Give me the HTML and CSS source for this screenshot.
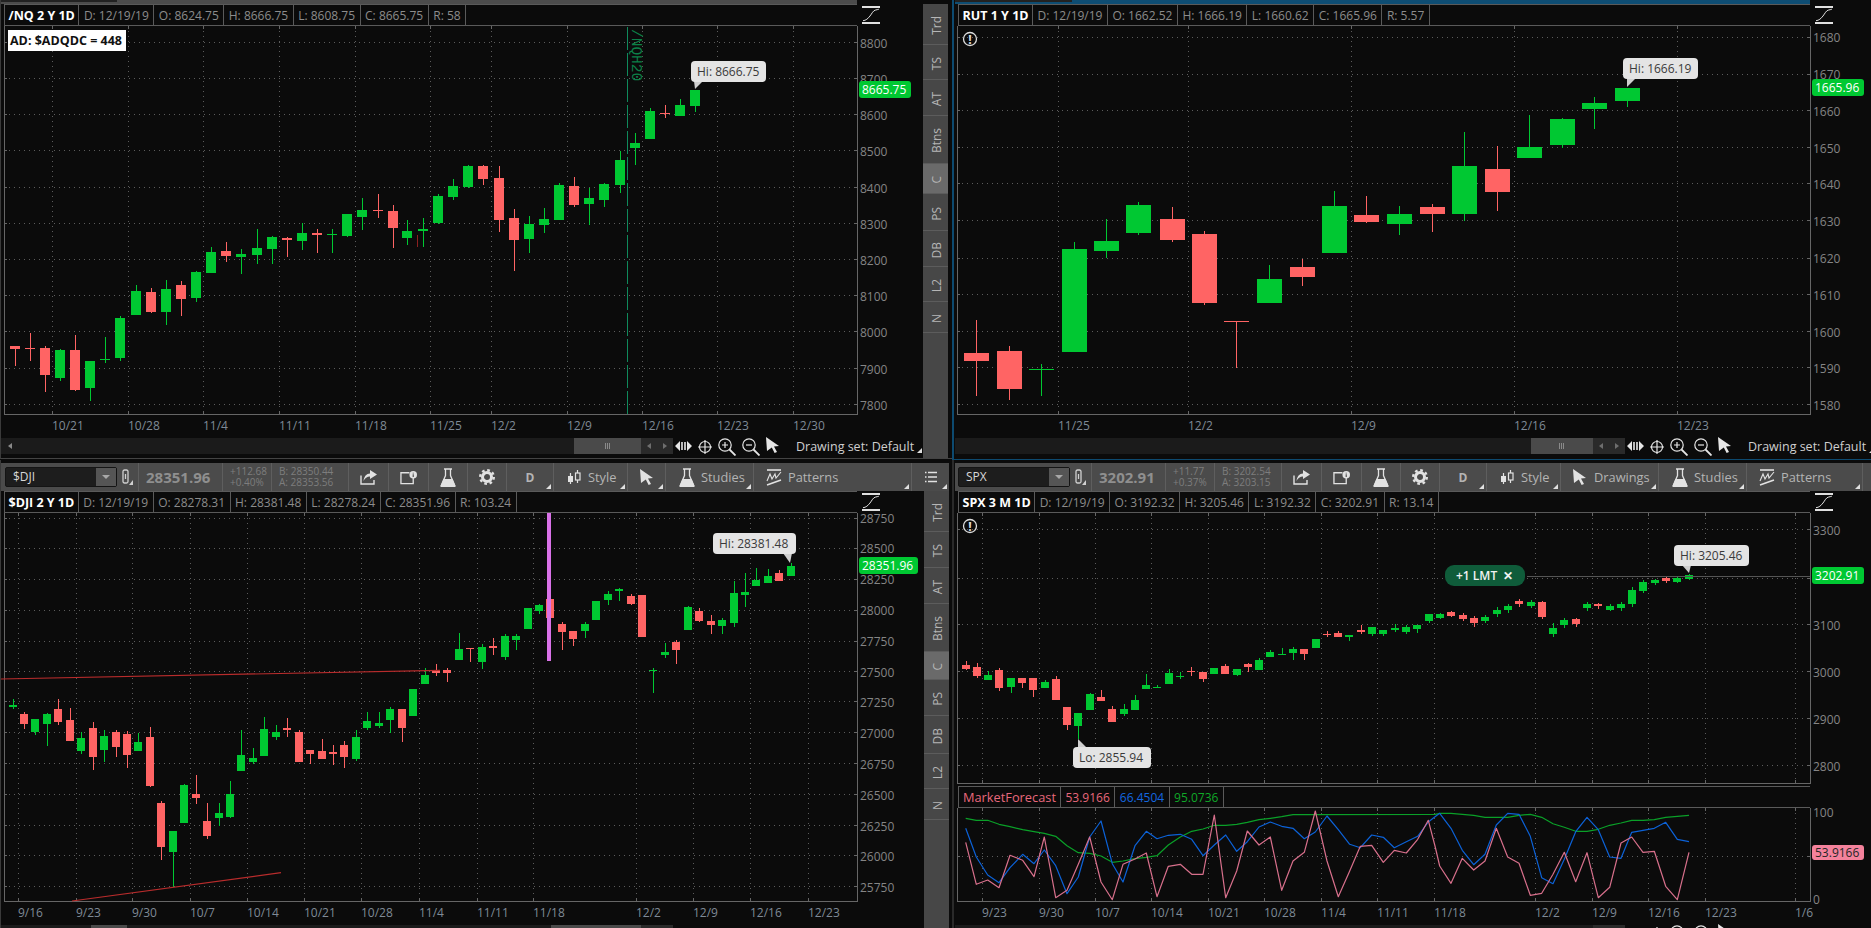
FILE: index.html
```html
<!DOCTYPE html>
<html lang="en">
<head>
<meta charset="utf-8">
<title>Charts</title>
<link rel="stylesheet" href="styles.css">
</head>
<body>
<svg class="defs" width="0" height="0" aria-hidden="true">
  <symbol id="i-curve" viewBox="0 0 18 18"><path class="s" d="M0 1h18M0 17h18" stroke-width="2"/><path class="s" d="M1 14.700C4 14.500 6 12.500 8 10S11 4.500 13.700 4 16 3.300 17 3.300" stroke-width="1"/></symbol>
  <symbol id="i-move" viewBox="0 0 17 12"><path class="f" d="M0 6l5-5v10zM17 6l-5-5v10z"/><path class="s" d="M7 2v8M10 2v8" stroke-width="1.6"/></symbol>
  <symbol id="i-target" viewBox="0 0 14 14"><circle class="s" cx="7" cy="7" r="5.5" stroke-width="1.2"/><path class="s" d="M7 0v14M0 7h14" stroke-width="1.2"/></symbol>
  <symbol id="i-zin" viewBox="0 0 18 18"><circle class="s" cx="7" cy="7" r="6.2" stroke-width="1.2"/><path class="s" d="M11.5 11.5l6 6" stroke-width="1.8"/><path class="s" d="M4 7h6M7 4v6" stroke-width="1.2"/></symbol>
  <symbol id="i-zout" viewBox="0 0 18 18"><circle class="s" cx="7" cy="7" r="6.2" stroke-width="1.2"/><path class="s" d="M11.5 11.5l6 6" stroke-width="1.8"/><path class="s" d="M4 7h6" stroke-width="1.2"/></symbol>
  <symbol id="i-cursor" viewBox="0 0 13 16"><path class="f" d="M0 0l13 9-5 .6 3 5.4-2.400 1-2.800-5.400L1 14z"/></symbol>
  <symbol id="i-link" viewBox="0 0 11 16"><rect class="s" x="1" y="1" width="5" height="13" rx="1.500" stroke-width="1.300"/><path class="s" d="M3.500 5v5" stroke-width="1.300"/><path class="f" d="M11 11v5H7z"/></symbol>
  <symbol id="i-share" viewBox="0 0 17 15"><path class="s" d="M1 5.500v8.500h13v-4" stroke-width="1.400"/><path class="f" d="M10 0l7 4.500-7 4.500V6.500C7 6.500 5 8 3.500 11 4 6.500 6.500 3.500 10 3.500z"/></symbol>
  <symbol id="i-folder" viewBox="0 0 18 14"><path class="s" d="M10 2H1v11.500h13V7" stroke-width="1.400"/><circle class="f" cx="14" cy="4" r="4"/><path class="h" d="M14 2v.8M14 3.500V6.500" stroke-width="1.200"/></symbol>
  <symbol id="i-flask" viewBox="0 0 16 19"><path class="f" d="M3.500 11h9l3 7c.200.500 0 1-.6 1H1.100c-.6 0-.8-.5-.6-1z"/><path class="s" d="M4 1h8M5.500 1v6.500L1 18M10.500 1v6.500L15 18" stroke-width="1.300"/></symbol>
  <symbol id="i-gear" viewBox="0 0 16 16"><circle class="s" cx="8" cy="8" r="4.500" stroke-width="3"/><circle class="d" cx="8" cy="8" r="6.800" stroke-width="2.400"/></symbol>
  <symbol id="i-style" viewBox="0 0 14 15"><path class="s" d="M3.500 3v11M10.500 0v13" stroke-width="1.200"/><rect class="f" x="1" y="6" width="5" height="6"/><rect class="b" x="8.500" y="3" width="4.500" height="7" stroke-width="1.200"/></symbol>
  <symbol id="i-pattern" viewBox="0 0 16 17"><path class="s" d="M1 1h14" stroke-width="1.600"/><path class="s" d="M1 12l3-7 2 5 3-5 1 4 5-6" stroke-width="1.100"/><path class="s" d="M1 16l14-5" stroke-width="1.600"/></symbol>
  <symbol id="i-list" viewBox="0 0 12 12"><path class="s" d="M3 1.500h9M3 6h9M3 10.500h9" stroke-width="1.500"/><path class="s" d="M0 1.500h1.500M0 6h1.500M0 10.500h1.500" stroke-width="1.500"/></symbol>
</svg>

<main class="desk">

  <section class="pane pane-left">
    <div class="content">
      <div class="strip strip-grey"></div>
      <div class="legend-row">
        <div class="legend legend-left">
          <span class="cell title">/NQ 2 Y 1D</span>
          <span class="cell">D: 12/19/19</span>
          <span class="cell">O: 8624.75</span>
          <span class="cell">H: 8666.75</span>
          <span class="cell">L: 8608.75</span>
          <span class="cell">C: 8665.75</span>
          <span class="cell">R: 58</span>
        </div>
        <div class="corner corner-left"><svg class="ico-curve"><use href="#i-curve"/></svg></div>
      </div>
      <svg class="plot" id="nq" viewBox="0 26 924 412" width="924" height="412"></svg>
      <div class="tools">
        <div class="track track-left">
          <span class="arrow"></span><span class="track-fill"></span>
          <span class="thumb thumb-tl"><i></i></span>
          <span class="btns"><span class="tri-l"></span><span class="tri-r"></span></span>
        </div>
        <svg class="tool t-move"><use href="#i-move"/></svg>
        <svg class="tool t-target"><use href="#i-target"/></svg>
        <svg class="tool t-zoom"><use href="#i-zin"/></svg>
        <svg class="tool t-zoom"><use href="#i-zout"/></svg>
        <svg class="tool t-cursor"><use href="#i-cursor"/></svg>
        <span class="drawset">Drawing set: Default</span>
      </div>
    </div>
    <aside class="side side-top">
      <span class="sbtn"><b>Trd</b></span><span class="sbtn"><b>TS</b></span><span class="sbtn"><b>AT</b></span><span class="sbtn"><b>Btns</b></span><span class="sbtn active"><b>C</b></span><span class="sbtn"><b>PS</b></span><span class="sbtn"><b>DB</b></span><span class="sbtn"><b>L2</b></span><span class="sbtn"><b>N</b></span>
    </aside>
  </section>

  <section class="pane pane-right">
    <div class="content">
      <div class="strip strip-blue"></div>
      <div class="legend-row">
        <div class="legend legend-right">
          <span class="cell title">RUT 1 Y 1D</span>
          <span class="cell">D: 12/19/19</span>
          <span class="cell">O: 1662.52</span>
          <span class="cell">H: 1666.19</span>
          <span class="cell">L: 1660.62</span>
          <span class="cell">C: 1665.96</span>
          <span class="cell">R: 5.57</span>
        </div>
        <div class="corner"><svg class="ico-curve"><use href="#i-curve"/></svg></div>
      </div>
      <svg class="plot" id="rut" viewBox="955 26 916 412" width="916" height="412"></svg>
      <div class="tools">
        <div class="track track-right">
          <span class="arrow"></span><span class="track-fill"></span>
          <span class="thumb thumb-tr"><i></i></span>
          <span class="btns"><span class="tri-l"></span><span class="tri-r"></span></span>
        </div>
        <svg class="tool t-move"><use href="#i-move"/></svg>
        <svg class="tool t-target"><use href="#i-target"/></svg>
        <svg class="tool t-zoom"><use href="#i-zin"/></svg>
        <svg class="tool t-zoom"><use href="#i-zout"/></svg>
        <svg class="tool t-cursor"><use href="#i-cursor"/></svg>
        <span class="drawset">Drawing set: Default</span>
      </div>
    </div>
  </section>

  <section class="pane pane-left pane-low">
    <header class="toolbar toolbar-left">
      <div class="symbol"><span class="sym-name">$DJI</span><span class="sym-drop"></span></div>
      <div class="tb tb-link"><svg class="ico ico-link"><use href="#i-link"/></svg></div>
      <div class="tb tb-price tb-price-wide">28351.96</div>
      <div class="tb tb-change"><span>+112.68</span><span>+0.40%</span></div>
      <div class="tb tb-quote tb-quote-wide"><span>B: 28350.44</span><span>A: 28353.56</span></div>
      <div class="tb tb-share"><svg class="ico ico-share"><use href="#i-share"/></svg></div>
      <div class="tb tb-share"><svg class="ico ico-share"><use href="#i-folder"/></svg></div>
      <div class="tb tb-icon"><svg class="ico ico-flask"><use href="#i-flask"/></svg></div>
      <div class="tb tb-icon"><svg class="ico ico-gear"><use href="#i-gear"/></svg></div>
      <div class="tb tb-d menu">D</div>
      <div class="tb tb-style menu"><svg class="ico ico-style"><use href="#i-style"/></svg>Style</div>
      <div class="tb tb-arrow menu"><svg class="ico ico-cursor"><use href="#i-cursor"/></svg></div>
      <div class="tb tb-studies menu"><svg class="ico ico-flask"><use href="#i-flask"/></svg>Studies</div>
      <div class="tb tb-patterns-wide menu"><svg class="ico ico-pattern"><use href="#i-pattern"/></svg>Patterns</div>
      <div class="tb tb-list menu"><svg class="ico ico-list"><use href="#i-list"/></svg></div>
    </header>
    <div class="pane-main">
      <div class="content">
        <div class="legend-row">
          <div class="legend legend-left">
            <span class="cell title">$DJI 2 Y 1D</span>
            <span class="cell">D: 12/19/19</span>
            <span class="cell">O: 28278.31</span>
            <span class="cell">H: 28381.48</span>
            <span class="cell">L: 28278.24</span>
            <span class="cell">C: 28351.96</span>
            <span class="cell">R: 103.24</span>
          </div>
          <div class="corner corner-left"><svg class="ico-curve"><use href="#i-curve"/></svg></div>
        </div>
        <svg class="plot" id="dji" viewBox="0 512 924 412" width="924" height="412"></svg>
        <div class="tools">
          <div class="track track-left">
            <span class="arrow"></span><span class="pad-dji"></span><span class="thumb thumb-dji"></span><span class="track-fill"></span>
            <span class="thumb thumb-bl"><i></i></span>
            <span class="btns"><span class="tri-l"></span><span class="tri-r"></span></span>
          </div>
        </div>
      </div>
      <aside class="side side-low">
        <span class="sbtn"><b>Trd</b></span><span class="sbtn"><b>TS</b></span><span class="sbtn"><b>AT</b></span><span class="sbtn"><b>Btns</b></span><span class="sbtn active"><b>C</b></span><span class="sbtn"><b>PS</b></span><span class="sbtn"><b>DB</b></span><span class="sbtn"><b>L2</b></span><span class="sbtn"><b>N</b></span>
      </aside>
    </div>
  </section>

  <section class="pane pane-right pane-low">
    <header class="toolbar toolbar-right">
      <div class="symbol"><span class="sym-name">SPX</span><span class="sym-drop"></span></div>
      <div class="tb tb-link"><svg class="ico ico-link"><use href="#i-link"/></svg></div>
      <div class="tb tb-price">3202.91</div>
      <div class="tb tb-change"><span>+11.77</span><span>+0.37%</span></div>
      <div class="tb tb-quote"><span>B: 3202.54</span><span>A: 3203.15</span></div>
      <div class="tb tb-share"><svg class="ico ico-share"><use href="#i-share"/></svg></div>
      <div class="tb tb-share"><svg class="ico ico-share"><use href="#i-folder"/></svg></div>
      <div class="tb tb-icon"><svg class="ico ico-flask"><use href="#i-flask"/></svg></div>
      <div class="tb tb-icon"><svg class="ico ico-gear"><use href="#i-gear"/></svg></div>
      <div class="tb tb-d menu">D</div>
      <div class="tb tb-style menu"><svg class="ico ico-style"><use href="#i-style"/></svg>Style</div>
      <div class="tb tb-drawings menu"><svg class="ico ico-cursor"><use href="#i-cursor"/></svg>Drawings</div>
      <div class="tb tb-studies menu"><svg class="ico ico-flask"><use href="#i-flask"/></svg>Studies</div>
      <div class="tb tb-patterns menu"><svg class="ico ico-pattern"><use href="#i-pattern"/></svg>Patterns</div>
    </header>
    <div class="content">
      <div class="legend-row">
        <div class="legend legend-right">
          <span class="cell title">SPX 3 M 1D</span>
          <span class="cell">D: 12/19/19</span>
          <span class="cell">O: 3192.32</span>
          <span class="cell">H: 3205.46</span>
          <span class="cell">L: 3192.32</span>
          <span class="cell">C: 3202.91</span>
          <span class="cell">R: 13.14</span>
        </div>
        <div class="corner"><svg class="ico-curve"><use href="#i-curve"/></svg></div>
      </div>
      <svg class="plot" id="spx" viewBox="955 512 916 273" width="916" height="273"></svg>
      <div class="legend legend-right">
        <span class="cell mf-name">MarketForecast</span>
        <span class="cell mf-pink">53.9166</span>
        <span class="cell mf-blue">66.4504</span>
        <span class="cell mf-green">95.0736</span>
      </div>
      <svg class="plot" id="mf" viewBox="955 807 916 117" width="916" height="117"></svg>
      <div class="tools">
        <div class="track track-right">
          <span class="arrow"></span><span class="track-fill"></span>
          <span class="btns"><span class="tri-l"></span><span class="tri-r"></span></span>
        </div>
        <svg class="tool t-move"><use href="#i-move"/></svg>
        <svg class="tool t-target"><use href="#i-target"/></svg>
        <svg class="tool t-zoom"><use href="#i-zin"/></svg>
        <svg class="tool t-zoom"><use href="#i-zout"/></svg>
        <svg class="tool t-cursor"><use href="#i-cursor"/></svg>
      </div>
    </div>
  </section>

</main>
<script src="chart.js"></script>
</body>
</html>
```
FILE: styles.css
```css
* { box-sizing: border-box; }
html, body { margin: 0; padding: 0; background: #0b0b0b; }
body { width: 1871px; height: 928px; overflow: hidden; font: 12px "Open Sans", "Liberation Sans", sans-serif; color: #8c8c8c; }
.defs { position: absolute; }

/* symbol paint */
.s { fill: none; stroke: currentColor; }
.f { fill: currentColor; }
.h { fill: none; stroke: #4b4b4b; }
.d { fill: none; stroke: currentColor; stroke-dasharray: 2.670 2.670; }
.b { fill: #4b4b4b; stroke: currentColor; }

.desk { display: grid; grid-template-columns: 952px 919px; grid-template-rows: 460px 468px; width: 1871px; height: 928px; }
.pane { display: flex; min-width: 0; min-height: 0; overflow: hidden; }
.pane-left { border-left: 1px solid #3a3a3a; }
.pane-left .content { width: 923px; margin-left: -1px; flex: none; }
.pane-right { border-left: 2px solid #0d4a70; padding-left: 1px; border-bottom: 1px solid #0d4a70; }
.pane-right .content { width: 916px; flex: none; }
.pane-low { flex-direction: column; padding-top: 3px; border-bottom: 0; background: #0b0b0b; }
.pane-low.pane-left .content, .pane-left .pane-main .content { width: 924px; margin-left: -1px; }
.pane-main { display: flex; min-height: 0; flex: 1; }
.pane-low.pane-right { border-left-color: #2a2a2a; padding-left: 1px; }
.pane:first-child { border-bottom: 1px solid #444; height: 459px; }
.pane-right:nth-child(2) { height: 460px; }

.content { display: flex; flex-direction: column; }
.strip { position: relative; height: 4px; flex: none; }
.strip-grey { width: 857px; background: #4c4c4c; }
.strip-blue { width: 855px; background: #0e4d73; }
.strip::before { content: ""; position: absolute; left: 0; top: 0; width: 117px; height: 2px; background: #222; }

.legend-row { display: flex; flex: none; }
.legend { display: flex; height: 22px; flex: none; border-top: 1px solid #5a5a5a; border-bottom: 1px solid #5a5a5a; }
.legend-left { width: 853px; margin-left: 4px; }
.legend-right { width: 852px; margin-left: 3px; }
.cell { display: flex; align-items: center; padding: 0 4.500px; border-right: 1px solid #5a5a5a; white-space: nowrap; color: #8c8c8c; }
.cell:first-child { border-left: 1px solid #5a5a5a; }
.title { color: #fff; font-weight: 700; font-size: 12.500px; padding: 0 3.500px; }
.mf-name { color: #e8687c; font-size: 12.800px; padding: 0 4px; }
.mf-pink { color: #e8687c; }
.mf-blue { color: #1468e0; }
.mf-green { color: #10a828; }
.corner { flex: 1; padding: 2px 0 0 5px; }
.corner-left { padding-left: 5px; }
.ico-curve { display: block; width: 18px; height: 18px; color: #e0e0e0; }

.plot { display: block; flex: none; background: #0b0b0b; }
.plot text { font-family: "Open Sans", "Liberation Sans", sans-serif; font-size: 12px; }
.ax { fill: #858585; }
.date { fill: #7f8a96; }
.tag-t { fill: #fff; }
.tag-p { fill: #262626; }
.bub-t { fill: #3a3a3a; }
.plot text.mono { fill: #0c8048; font-family: "Liberation Mono", monospace; font-size: 14.500px; }
.plot text.ad-t { fill: #111; font-weight: 700; font-size: 12.500px; }
.pill-t { fill: #f2f2f2; font-weight: 600; }
.warn-t { fill: #e0e0e0; font-weight: 700; }

.tools { display: flex; align-items: center; height: 16px; flex: none; color: #e6e6e6; }
.track { display: flex; height: 16px; flex: none; background: #1b1b1b; align-items: center; }
.track-left { width: 672px; margin-left: 1px; }
.track-right { width: 670px; }
.track-fill { flex: 1; }
.arrow { width: 14px; height: 16px; position: relative; }
.track-left .arrow::after { content: ""; position: absolute; left: 7px; top: 5px; border-style: solid; border-width: 3px 4px 3px 0; border-color: transparent #8a8a8a transparent transparent; }
.thumb { display: flex; height: 16px; align-items: center; justify-content: center; background: #4a4a4a; }
.thumb i { display: block; width: 6px; height: 6px; background: repeating-linear-gradient(90deg, #8a8a8a 0 1px, transparent 1px 2px); }
.thumb-tl { width: 67px; }
.thumb-tr { width: 62px; }
.thumb-bl { width: 90px; }
.thumb-dji { width: 36px; }
.pad-dji { width: 76px; }
.btns { display: flex; width: 32px; height: 16px; background: #2a2a2a; align-items: center; justify-content: space-around; }
.tri-l { border-style: solid; border-width: 3px 4px 3px 0; border-color: transparent #6e6e6e transparent transparent; }
.tri-r { border-style: solid; border-width: 3px 0 3px 4px; border-color: transparent transparent transparent #6e6e6e; }

.tool { flex: none; margin-left: 6px; }
.t-move { width: 17px; height: 12px; margin-left: 2px; }
.t-target { width: 14px; height: 14px; margin-top: 1px; }
.t-zoom { width: 18px; height: 18px; margin-top: 1px; }
.t-cursor { width: 13px; height: 16px; margin-top: -3px; }
.drawset { position: relative; margin-left: 17px; white-space: nowrap; color: #cfcfcf; font-size: 12.500px; }
.drawset::after { content: ""; position: absolute; right: -8px; bottom: 2px; border-style: solid; border-width: 0 0 5px 5px; border-color: transparent transparent #ddd transparent; }

.side { width: 25px; flex: none; background: #474747; display: flex; flex-direction: column; }
.side-top { margin-top: 4px; height: 454px; }
.sbtn { display: flex; justify-content: center; align-items: center; height: 36px; flex: none; padding-top: 3px; border-bottom: 1px solid #5c5c5c; }
.sbtn:nth-child(1) { height: 41px; }
.sbtn:nth-child(2) { height: 35px; }
.sbtn:nth-child(4) { height: 48px; }
.sbtn:nth-child(5) { height: 30px; }
.sbtn:nth-child(6) { height: 37px; }
.sbtn:nth-child(8) { height: 35px; }
.sbtn:nth-child(9) { height: 31px; }
.side-low .sbtn:nth-child(2) { height: 36px; }
.side-low .sbtn:nth-child(5) { height: 28px; }
.side-low .sbtn:nth-child(6) { height: 36px; }
.side-low .sbtn:nth-child(7) { height: 38px; }
.sbtn b { font-weight: 400; color: #b6b6b6; writing-mode: vertical-rl; transform: rotate(180deg); line-height: 1; margin-left: 2px; }
.sbtn.active { background: #6a6a6a; }

.toolbar { display: flex; height: 28px; flex: none; background: #4b4b4b; color: #b4b4b4; align-items: stretch; font-size: 12.800px; }
.toolbar-left { width: 948px; }
.toolbar-right { width: 916px; }
.symbol { display: flex; width: 112px; height: 20px; margin: 4px 0 0 3px; background: #1d1d1d; border: 1px solid #141414; border-radius: 2px; flex: none; }
.toolbar-left .symbol { margin-left: 4px; }
.sym-name { flex: 1; padding-left: 7px; color: #d8d8d8; line-height: 18px; font-size: 12px; }
.sym-drop { position: relative; width: 20px; background: #555; }
.sym-drop::after { content: ""; position: absolute; left: 6px; top: 7px; border-style: solid; border-width: 4px 4px 0; border-color: #a8a8a8 transparent transparent; }
.tb { position: relative; display: flex; align-items: center; flex: none; border-right: 1px solid #5e5e5e; }
.tb-link { width: 22px; justify-content: center; }
.tb-price { width: 74px; padding-left: 7px; font-weight: 700; font-size: 15px; color: #8f8f8f; }
.tb-price-wide { width: 84px; }
.tb-change, .tb-quote { flex-direction: column; justify-content: center; font-size: 10px; line-height: 11px; color: #7d7d7d; align-items: flex-start; }
.tb-change { width: 49px; padding-left: 7px; }
.tb-quote { width: 67px; padding-left: 7px; }
.tb-quote-wide { width: 77px; }
.tb-share { width: 40px; justify-content: center; }
.tb-icon { width: 39px; justify-content: center; }
.tb-d { width: 47px; justify-content: center; font-weight: 700; font-size: 12px; }
.tb-style { width: 74px; padding-left: 13px; gap: 7px; }
.tb-arrow { width: 38px; padding-left: 12px; }
.tb-drawings { width: 98px; padding-left: 12px; gap: 8px; }
.tb-studies { width: 88px; padding-left: 13px; gap: 6px; }
.tb-patterns { width: 116px; padding-left: 12px; gap: 6px; }
.tb-patterns-wide { width: 158px; padding-left: 12px; gap: 6px; }
.tb-list { width: 37px; padding-left: 13px; border-right: 0; }
.menu::after { content: ""; position: absolute; right: 2px; bottom: 2px; border-style: solid; border-width: 0 0 5px 5px; border-color: transparent transparent #e0e0e0 transparent; }
.ico { flex: none; color: #e2e2e2; }
.ico-link { width: 11px; height: 16px; color: #d0d0d0; }
.ico-share { width: 17px; height: 15px; }
.ico-flask { width: 16px; height: 19px; }
.ico-gear { width: 16px; height: 16px; }
.ico-style { width: 14px; height: 15px; }
.ico-cursor { width: 13px; height: 16px; }
.ico-pattern { width: 16px; height: 17px; }
.ico-list { width: 12px; height: 12px; }
```
FILE: chart.js
```js
const NS = 'http://www.w3.org/2000/svg';
const GREEN = '#00c832', RED = '#ff6464', GRID = '#5c5c5c', AXIS = '#666';

function el(svg, name, attrs, text) {
  const n = document.createElementNS(NS, name);
  for (const k in attrs) n.setAttribute(k, attrs[k]);
  if (text !== undefined) n.textContent = text;
  svg.appendChild(n);
  return n;
}
const box = (svg, x, y, w, h, fill, extra) =>
  el(svg, 'rect', Object.assign({ x, y, width: w, height: h, fill, 'shape-rendering': 'crispEdges' }, extra || {}));

function frame(svg, c) {
  const { l, r, t, b } = c;
  c.ys.forEach(p => {
    const y = Math.round(p[0]) + 0.5;
    el(svg, 'path', { d: `M${l} ${y}H${r}`, stroke: GRID, 'stroke-dasharray': '1 4', 'shape-rendering': 'crispEdges' });
    el(svg, 'path', { d: `M${l} ${y}h3M${r - 3} ${y}h3`, stroke: AXIS, 'shape-rendering': 'crispEdges' });
  });
  c.xs.forEach(p => {
    const x = Math.round(p[0]) + 0.5;
    el(svg, 'path', { d: `M${x} ${t}V${b}`, stroke: GRID, 'stroke-dasharray': '1 4', 'shape-rendering': 'crispEdges' });
    el(svg, 'path', { d: `M${x} ${t}v3M${x} ${b - 3}v3`, stroke: AXIS, 'shape-rendering': 'crispEdges' });
    if (p[1] && c.dateY) el(svg, 'text', { x: x - 0.5, y: c.dateY, class: 'date' }, p[1]);
  });
  const f = `M${l + .5} ${t}V${b + .5}H${r + .5}V${t}`;
  el(svg, 'path', { d: f, fill: 'none', stroke: AXIS, 'shape-rendering': 'crispEdges' });
  c.ys.forEach(p => {
    if (p[1]) el(svg, 'text', { x: r + 3, y: p[0] + 5.5, class: 'ax' }, p[1]);
  });
}

function candles(svg, list, w, map) {
  list.forEach(d => {
    const m = map ? map(d) : d;
    const col = d[5] ? GREEN : RED;
    const x = Math.round(m[0]);
    const wt = Math.round(m[1]), wb = Math.round(m[2]), bt = Math.round(m[3]), bb = Math.round(m[4]);
    box(svg, x, wt, 1, Math.max(1, wb - wt), col);
    box(svg, x - Math.floor(w / 2), bt, w, Math.max(1, bb - bt), col);
  });
}

function tag(svg, x, y, w, h, fill, cls, text) {
  el(svg, 'rect', { x, y, width: w, height: h, rx: 3, fill });
  el(svg, 'text', { x: x + 3, y: y + h / 2 + 4.5, class: cls }, text);
}

function bubble(svg, x, y, w, h, tip, base, text) {
  const edge = tip[1] > y ? y + h - 1 : y + 1;
  el(svg, 'polygon', { points: `${base},${edge} ${base + 9},${edge} ${tip[0]},${tip[1]}`, fill: '#cfcfcf' });
  el(svg, 'rect', { x, y, width: w, height: h, rx: 4, fill: '#e4e4e4' });
  el(svg, 'text', { x: x + 6, y: y + h / 2 + 4.5, class: 'bub-t' }, text);
}

function warn(svg, cx, cy) {
  el(svg, 'circle', { cx, cy, r: 6.5, fill: 'none', stroke: '#dedede', 'stroke-width': 1.3 });
  el(svg, 'text', { x: cx, y: cy + 4.5, 'text-anchor': 'middle', class: 'warn-t' }, '!');
}

const g1 = id => document.getElementById(id);

/* ---------- /NQ ---------- */
(function () {
  const s = g1('nq');
  frame(s, {
    l: 4, r: 857, t: 26, b: 414, dateY: 430,
    xs: [[52.3, '10/21'], [128.3, '10/28'], [203.3, '11/4'], [279.3, '11/11'], [354.7, '11/18'], [430.3, '11/25'], [491.3, '12/2'], [566.7, '12/9'], [642.3, '12/16'], [717.3, '12/23'], [793.3, '12/30']],
    ys: [[42.3, '8800'], [78.3, '8700'], [114, '8600'], [150.3, '8500'], [187.3, '8400'], [223.3, '8300'], [259.3, '8200'], [295.3, '8100'], [331.3, '8000'], [368.3, '7900'], [404.3, '7800']]
  });
  candles(s, [
    [15, 346, 366, 346, 349, 0], [29.7, 333, 361, 348, 349, 0], [45, 346, 392, 348, 375, 0], [60, 349, 381, 350, 378, 1],
    [75, 335, 391, 350, 390, 0], [90, 361, 401, 361, 388, 1], [104.7, 337, 363, 359, 360, 1], [120, 316, 361, 318, 358, 1],
    [135.7, 285, 315, 291, 315, 1], [151, 288, 313, 292, 312, 0], [166, 280, 325, 289, 312, 1], [181, 281, 316, 285, 299, 0],
    [196, 271, 302, 272, 298, 1], [211, 247, 273, 252, 273, 1], [226, 242, 262, 251, 256, 0], [241, 249, 274, 254, 257, 1],
    [256.7, 229, 264, 248, 255, 1], [271.7, 236, 264, 237, 249, 1], [286.7, 237, 257, 238, 240, 0], [301.7, 223, 250, 233, 241, 1],
    [316.7, 229, 253, 233, 235, 0], [331.7, 229, 253, 234, 235, 1], [346.7, 214, 237, 214, 236, 1], [361.7, 198, 230, 210, 217, 1],
    [377.7, 194, 218, 210, 211, 0], [392.7, 205, 248, 211, 228, 0], [407.3, 220, 245, 231, 238, 1], [422.7, 218, 247, 229, 231, 1],
    [437.7, 194, 224, 196, 223, 1], [452.7, 179, 200, 186, 197, 1], [468, 165, 188, 166, 187, 1], [483, 165, 185, 166, 179, 0],
    [498.7, 166, 232, 178, 220, 0], [513.7, 209, 271, 218, 240, 0], [528.7, 216, 253, 224, 239, 1], [543.7, 208, 233, 219, 225, 1],
    [558.7, 183, 220, 185, 220, 1], [573.7, 177, 207, 186, 205, 0], [588.7, 188, 225, 198, 204, 1], [603.7, 183, 207, 184, 200, 1],
    [619.7, 151, 193, 160, 185, 1], [634.7, 133, 165, 143, 148, 1], [650, 108, 139, 111, 139, 1], [665, 105, 118, 113, 114, 0],
    [680, 99, 116, 105, 116, 1], [695, 90, 112, 90, 106, 1]
  ], 10);
  box(s, 417, 235, 1, 12, '#8c2020');
  el(s, 'path', { d: 'M627.5 27V414', stroke: '#0f8a5c', 'stroke-dasharray': '23 3', 'shape-rendering': 'crispEdges' });
  el(s, 'text', { transform: 'translate(632,29) rotate(90)', class: 'mono' }, '/NQH20');
  bubble(s, 691, 61, 75, 21, [695, 89], 694, 'Hi: 8666.75');
  tag(s, 859, 81, 52, 17, '#00c832', 'tag-t', '8665.75');
  box(s, 8, 30, 118, 21, '#fff');
  el(s, 'text', { x: 10, y: 45, class: 'ad-t' }, 'AD: $ADQDC = 448');
})();

/* ---------- RUT ---------- */
(function () {
  const s = g1('rut');
  frame(s, {
    l: 957, r: 1810, t: 26, b: 414, dateY: 430,
    xs: [[1057.7, '11/25'], [1188.3, '12/2'], [1350.7, '12/9'], [1513.5, '12/16'], [1676.5, '12/23']],
    ys: [[36.7, '1680'], [73.7, '1670'], [110.3, '1660'], [147, '1650'], [183, '1640'], [220, '1630'], [257.7, '1620'], [294.3, '1610'], [331, '1600'], [367, '1590'], [404, '1580']]
  });
  candles(s, [
    [976, 320, 396, 353, 361, 0], [1009, 346, 400, 351, 389, 0], [1041, 364, 396, 369, 370, 1], [1074, 242, 352, 249, 352, 1],
    [1106, 219, 258, 241, 251, 1], [1138.3, 202, 235, 205, 233, 1], [1171.7, 207, 242, 219, 240, 0], [1204, 231, 305, 234, 303, 0],
    [1236, 321, 368, 321, 322, 0], [1269, 265, 303, 279, 303, 1], [1301.5, 259, 286, 267, 277, 0], [1334.3, 191, 253, 206, 253, 1],
    [1366.3, 196, 223, 215, 222, 0], [1399.3, 206, 235, 214, 224, 1], [1432.3, 204, 232, 207, 214, 0], [1464.3, 132, 221, 166, 214, 1],
    [1497.3, 146, 211, 169, 192, 0], [1529.3, 115, 158, 147, 158, 1], [1562.3, 118, 148, 119, 145, 1], [1594.3, 97, 129, 103, 109, 1],
    [1627.3, 88, 107, 88, 101, 1]
  ], 25);
  warn(s, 970, 39);
  bubble(s, 1623, 58, 75, 21, [1627, 87], 1627, 'Hi: 1666.19');
  tag(s, 1812, 79, 52, 17, '#00c832', 'tag-t', '1665.96');
})();

/* ---------- $DJI ---------- */
(function () {
  const s = g1('dji');
  frame(s, {
    l: 4, r: 857, t: 512, b: 900, dateY: 916,
    xs: [[18.3, '9/16'], [75.7, '9/23'], [132.3, '9/30'], [190.3, '10/7'], [247.3, '10/14'], [304.3, '10/21'], [361.3, '10/28'], [419.3, '11/4'], [477, '11/11'], [533.3, '11/18'], [636.3, '12/2'], [693.3, '12/9'], [750.3, '12/16'], [808.3, '12/23']],
    ys: [[516.5, '28750'], [546.7, '28500'], [577.5, '28250'], [608.5, '28000'], [639.5, '27750'], [670.3, '27500'], [700.3, '27250'], [731, '27000'], [762.3, '26750'], [793.3, '26500'], [824.3, '26250'], [854.3, '26000'], [885.3, '25750']]
  });
  const zA = d => [d[0] / 3, 640 + d[1] / 3, 640 + d[2] / 3, 640 + d[3] / 3, 640 + d[4] / 3];
  const zB = d => [480 + d[0] / 3, 460 + d[1] / 3, 460 + d[2] / 3, 460 + d[3] / 3, 460 + d[4] / 3];
  candles(s, [
    [39, 173, 203, 191, 197, 1], [72, 212, 263, 219, 249, 0], [105, 234, 281, 234, 273, 1], [141, 216, 315, 219, 249, 1],
    [174, 175, 251, 204, 243, 0], [210, 202, 301, 237, 300, 0], [243, 272, 338, 291, 330, 1], [279, 244, 386, 261, 348, 0],
    [312, 268, 364, 285, 327, 1], [348, 267, 347, 273, 318, 0], [381, 271, 380, 279, 342, 0], [414, 275, 330, 303, 330, 1],
    [450, 259, 437, 288, 435, 0], [483, 480, 657, 486, 618, 0], [519, 570, 738, 570, 633, 1], [552, 428, 546, 432, 546, 1],
    [588, 403, 488, 459, 471, 0], [621, 487, 593, 540, 585, 0], [657, 487, 554, 516, 531, 1], [690, 421, 530, 459, 528, 1],
    [723, 268, 390, 342, 390, 1], [759, 321, 368, 351, 363, 1], [792, 229, 345, 264, 345, 1], [828, 253, 296, 273, 288, 1],
    [861, 232, 287, 261, 267, 0], [897, 268, 363, 273, 363, 0], [930, 327, 369, 327, 339, 0], [966, 295, 354, 330, 354, 0],
    [999, 312, 371, 333, 339, 0], [1032, 301, 380, 312, 348, 0], [1068, 268, 361, 288, 354, 1], [1101, 214, 266, 240, 261, 1],
    [1137, 213, 261, 246, 255, 1], [1170, 199, 276, 204, 237, 1], [1206, 204, 304, 204, 261, 0], [1239, 144, 225, 144, 225, 1],
    [1275, 82, 129, 102, 129, 1], [1308, 68, 106, 86, 96, 0], [1341, 80, 124, 87, 96, 0], [1377, -24, 57, 24, 57, 1],
    [1410, 20, 62, 20, 23, 0]
  ], 8, zA);
  candles(s, [
    [6, 550, 623, 558, 603, 1], [40, 530, 582, 555, 560, 0], [75, 518, 598, 525, 588, 1], [108, 518, 567, 525, 538, 1],
    [144, 441, 504, 441, 504, 1], [177, 430, 458, 432, 450, 1], [210, 414, 471, 414, 471, 0], [246, 483, 567, 489, 513, 0],
    [279, 510, 555, 510, 534, 0], [315, 483, 530, 489, 510, 1], [348, 420, 477, 420, 477, 1], [384, 391, 431, 399, 417, 1],
    [417, 380, 419, 384, 389, 1], [453, 400, 431, 405, 429, 0], [486, 402, 528, 402, 528, 0], [519, 622, 695, 627, 628, 1],
    [555, 547, 590, 573, 582, 1], [588, 537, 608, 543, 567, 0], [624, 434, 507, 438, 507, 1], [657, 442, 483, 450, 480, 0],
    [693, 463, 518, 481, 492, 0], [726, 472, 518, 477, 495, 1], [762, 361, 497, 396, 486, 1], [795, 337, 437, 393, 402, 1],
    [828, 320, 375, 357, 375, 1], [864, 325, 366, 345, 366, 1], [897, 326, 360, 336, 360, 0], [933, 305, 345, 315, 345, 1]
  ], 8, zB);
  box(s, 547, 512, 4, 148, '#d972e8');
  el(s, 'path', { d: 'M0 678L440 669.300', stroke: '#b82c2c', 'stroke-width': 1.2, fill: 'none' });
  el(s, 'path', { d: 'M72 900L281 871.700', stroke: '#b82c2c', 'stroke-width': 1.2, fill: 'none' });
  bubble(s, 713, 532, 83, 21, [790, 562], 783, 'Hi: 28381.48');
  tag(s, 859, 556, 59, 17, '#00c832', 'tag-t', '28351.96');
})();

/* ---------- SPX ---------- */
const SPX_X = [[982.3, '9/23'], [1039.3, '9/30'], [1095.3, '10/7'], [1151.3, '10/14'], [1208.3, '10/21'], [1264.3, '10/28'], [1321.3, '11/4'], [1377.3, '11/11'], [1434.3, '11/18'], [1535.3, '12/2'], [1592.3, '12/9'], [1648.3, '12/16'], [1705.3, '12/23'], [1795.3, '1/6']];
(function () {
  const s = g1('spx');
  frame(s, {
    l: 957, r: 1810, t: 512, b: 782,
    xs: SPX_X.map(p => [p[0]]),
    ys: [[528.3, '3300'], [576.7, ''], [623.3, '3100'], [670.3, '3000'], [717.3, '2900'], [764.3, '2800']]
  });
  const z = d => [955 + d[0] / 3, 460 + d[1] / 3, 460 + d[2] / 3, 460 + d[3] / 3, 460 + d[4] / 3];
  candles(s, [
    [33, 601, 628, 613, 625, 0], [66, 606, 652, 618, 645, 0], [99, 631, 657, 642, 657, 1], [132, 620, 691, 627, 681, 0],
    [168, 651, 697, 651, 678, 1], [201, 651, 682, 651, 666, 0], [234, 651, 709, 651, 687, 0], [270, 657, 681, 664, 681, 1],
    [303, 644, 718, 654, 717, 0], [336, 738, 808, 738, 792, 0], [369, 756, 835, 756, 795, 1], [405, 697, 747, 699, 747, 1],
    [438, 688, 720, 708, 720, 0], [471, 736, 783, 744, 783, 0], [507, 730, 764, 744, 759, 1], [540, 703, 747, 717, 747, 1],
    [573, 640, 684, 672, 684, 1], [606, 672, 682, 678, 681, 1], [642, 625, 669, 636, 669, 1], [675, 634, 653, 644, 647, 1],
    [708, 618, 644, 630, 634, 0], [744, 633, 664, 633, 654, 0], [777, 621, 639, 621, 639, 1], [810, 609, 639, 615, 639, 0],
    [846, 624, 644, 624, 642, 1], [879, 605, 632, 609, 618, 0], [912, 592, 627, 597, 627, 1], [945, 567, 588, 573, 588, 1],
    [981, 562, 583, 578, 581, 1], [1014, 559, 596, 564, 576, 1], [1047, 564, 598, 564, 579, 0], [1083, 534, 561, 534, 561, 1],
    [1116, 510, 527, 518, 521, 0], [1149, 510, 528, 516, 528, 0], [1182, 522, 539, 522, 527, 1], [1218, 492, 518, 507, 513, 0],
    [1251, 498, 526, 498, 519, 1], [1284, 507, 524, 507, 519, 1], [1320, 488, 512, 501, 507, 1], [1353, 491, 520, 498, 513, 1],
    [1386, 492, 515, 492, 504, 1], [1422, 459, 485, 459, 480, 1]
  ], 8, z);
  const rest = [
    [612, 618, 613, 617, 1], [610, 616, 611, 615, 0], [612, 620, 614, 618, 0], [615, 626, 617, 622, 0], [614, 622, 616, 620, 1],
    [606, 616, 609, 613, 1], [603, 612, 605, 609, 1], [598, 606, 600, 603, 0], [599, 607, 601, 605, 1], [600, 618, 601, 616, 0],
    [622, 636, 627, 633, 1], [617, 627, 619, 624, 1], [617, 626, 618, 623, 0], [601, 610, 603, 607, 1], [602, 608, 603, 605, 0],
    [603, 610, 605, 609, 1], [601, 610, 603, 607, 1], [586, 606, 589, 603, 1], [579, 592, 581, 590, 1], [578, 584, 579, 582, 1],
    [576, 582, 577, 580, 0], [575, 582, 577, 581, 1], [573, 579, 574, 578, 1]
  ].map((d, i) => [966 + 11.29 * (i + 42), d[0], d[1], d[2], d[3], d[4]]);
  candles(s, rest, 8);
  box(s, 1527, 575, 283, 1, '#555');
  el(s, 'rect', { x: 1445, y: 564, width: 80, height: 21, rx: 9, fill: '#0f5c3a' });
  el(s, 'text', { x: 1456, y: 579, class: 'pill-t' }, '+1 LMT');
  el(s, 'text', { x: 1503, y: 579, class: 'pill-t' }, '✕');
  warn(s, 970, 525);
  bubble(s, 1674, 544, 75, 21, [1689, 572], 1682, 'Hi: 3205.46');
  bubble(s, 1073, 746, 78, 21, [1078, 738], 1078, 'Lo: 2855.94');
  tag(s, 1812, 566, 52, 17, '#00c832', 'tag-t', '3202.91');
})();

/* ---------- MarketForecast ---------- */
(function () {
  const s = g1('mf');
  frame(s, {
    l: 957, r: 1810, t: 807, b: 900, dateY: 916,
    xs: SPX_X,
    ys: [[854.7, '']]
  });
  el(s, 'text', { x: 1813, y: 816, class: 'ax' }, '100');
  el(s, 'text', { x: 1813, y: 903, class: 'ax' }, '0');
  el(s, 'text', { x: 1813, y: 859, class: 'ax' }, '50');
  const A = a => a.map(p => [955 + p[0] / 3, 770 + p[1] / 3]);
  const B = a => a.map(p => [1435 + p[0] / 3, 770 + p[1] / 3]);
  const line = (a, b, col) => el(s, 'polyline', {
    points: A(a).concat(B(b)).map(p => p[0].toFixed(1) + ',' + p[1].toFixed(1)).join(' '),
    fill: 'none', stroke: col, 'stroke-width': 1.2, 'stroke-linejoin': 'round'
  });
  line(
    [[32, 142], [64, 148], [98, 148], [132, 160], [165, 167], [203, 176], [237, 182], [268, 187], [302, 196], [336, 224], [370, 245], [404, 247], [438, 255], [472, 274], [504, 270], [540, 263], [574, 259], [606, 254], [640, 222], [676, 198], [710, 181], [744, 174], [778, 163], [812, 163], [845, 160], [877, 154], [912, 146], [946, 142], [980, 137], [1014, 131], [1048, 131], [1440, 130]],
    [[14, 127], [48, 127], [82, 130], [116, 133], [150, 139], [184, 139], [218, 139], [252, 133], [286, 130], [320, 139], [354, 158], [388, 169], [422, 181], [456, 181], [490, 175], [524, 163], [558, 156], [590, 148], [624, 148], [658, 146], [692, 139], [727, 136], [762, 133]],
    '#0aa028');
  line(
    [[32, 172], [64, 258], [98, 312], [132, 335], [165, 290], [203, 250], [237, 278], [268, 237], [302, 284], [336, 368], [370, 318], [404, 198], [438, 150], [472, 278], [504, 333], [540, 224], [574, 181], [606, 203], [640, 193], [676, 190], [710, 205], [744, 254], [778, 222], [812, 192], [845, 241], [877, 212], [912, 168], [946, 153], [980, 166], [1014, 172], [1048, 203], [1081, 183], [1116, 135], [1150, 176], [1184, 220], [1216, 230], [1250, 192], [1285, 199], [1318, 230], [1354, 212], [1388, 196], [1420, 153], [1440, 137]],
    [[14, 127], [48, 172], [82, 238], [116, 281], [150, 250], [184, 162], [218, 127], [252, 130], [286, 196], [320, 320], [354, 338], [388, 265], [422, 182], [456, 139], [490, 176], [524, 258], [558, 262], [590, 184], [624, 178], [658, 172], [692, 154], [727, 205], [762, 212]],
    '#0c62d8');
  line(
    [[32, 214], [64, 340], [98, 327], [132, 350], [165, 253], [203, 268], [237, 317], [268, 198], [302, 380], [336, 358], [370, 280], [404, 198], [438, 333], [472, 386], [504, 280], [540, 264], [574, 246], [606, 377], [640, 286], [676, 280], [710, 310], [744, 310], [778, 132], [812, 380], [845, 300], [877, 180], [912, 222], [946, 198], [980, 358], [1014, 270], [1048, 244], [1081, 120], [1116, 270], [1150, 377], [1184, 300], [1216, 226], [1250, 223], [1285, 274], [1318, 238], [1354, 246], [1388, 205], [1420, 148], [1440, 225]],
    [[14, 285], [48, 337], [82, 262], [116, 297], [150, 270], [184, 172], [218, 258], [252, 277], [286, 373], [320, 367], [354, 310], [388, 244], [422, 332], [456, 245], [490, 380], [524, 349], [558, 216], [590, 198], [624, 244], [658, 241], [692, 346], [727, 386], [762, 244]],
    '#d8708c');
  tag(s, 1812, 844, 52, 15, '#f4829c', 'tag-p', '53.9166');
})();
```
